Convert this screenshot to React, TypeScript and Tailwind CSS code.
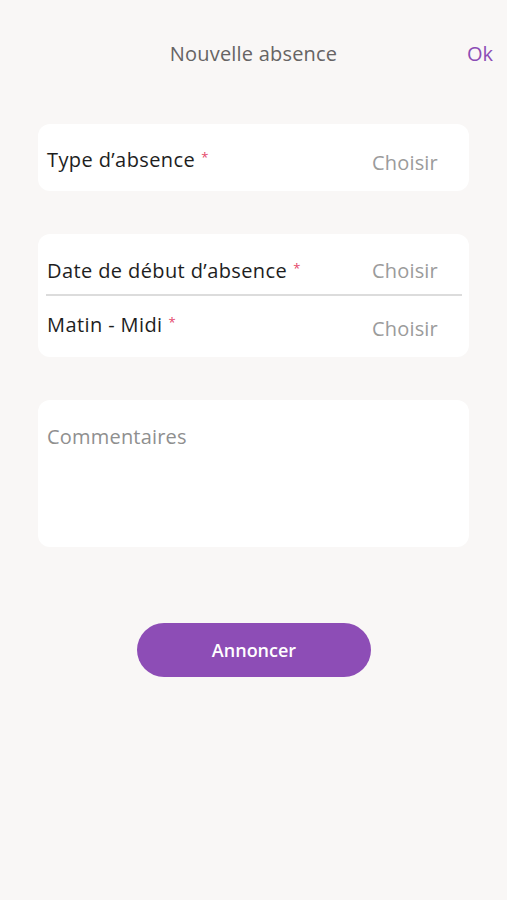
import React from "react";

const font = { fontFamily: "'Open Sans', 'Noto Sans', sans-serif" };

function Star() {
  return <span className="ml-[6px] text-[13px] text-[#e4476a] relative top-[-5px]">*</span>;
}

const label = "text-[20px] text-[#1e1e1e] leading-[26px] tracking-[0.4px]";
const hint = "text-[20px] text-[#9b9b9b] leading-[26px] tracking-[0.2px]";

export default function App() {
  return (
    <div className="w-[507px] h-[900px] bg-[#f9f7f6] flex flex-col" style={font}>
      <div className="relative h-[54px] mt-[27px] flex items-center justify-center">
        <span className="text-[20px] text-[#666464] tracking-[0.2px]">Nouvelle absence</span>
        <span className="absolute right-[14px] top-[12px] text-[20px] text-[#8c4db5]">Ok</span>
      </div>

      <div className="mx-[38px] mt-[43px] h-[67px] bg-white rounded-[12px] flex justify-between px-[9px] pr-[31px]">
        <div className={`pt-[23px] ${label}`}>
          Type d’absence<Star />
        </div>
        <div className={`pt-[26px] ${hint}`}>Choisir</div>
      </div>

      <div className="mx-[38px] mt-[43px] h-[123px] bg-white rounded-[12px] flex flex-col px-[8px]">
        <div className="h-[62px] flex justify-between items-start border-b-[2px] border-[#dcdcdc] mr-[-1px]">
          <div className={`pt-[24px] pl-[1px] ${label}`}>
            Date de début d’absence<Star />
          </div>
          <div className={`pt-[24px] pr-[24px] ${hint}`}>Choisir</div>
        </div>
        <div className="flex justify-between items-start">
          <div className={`pt-[16px] pl-[1px] ${label}`}>
            Matin - Midi<Star />
          </div>
          <div className={`pt-[20px] pr-[23px] ${hint}`}>Choisir</div>
        </div>
      </div>

      <div className="mx-[38px] mt-[43px] h-[147px] bg-white rounded-[12px] px-[9px] pt-[24px]">
        <div className="text-[20px] text-[#8f8f8f] leading-[26px] tracking-[0.2px]">Commentaires</div>
      </div>

      <div className="flex justify-center mt-[76px] pl-[1px]">
        <button className="w-[234px] h-[54px] rounded-full bg-[#8d4db6] text-white text-[18px] font-semibold">
          Annoncer
        </button>
      </div>
    </div>
  );
}
